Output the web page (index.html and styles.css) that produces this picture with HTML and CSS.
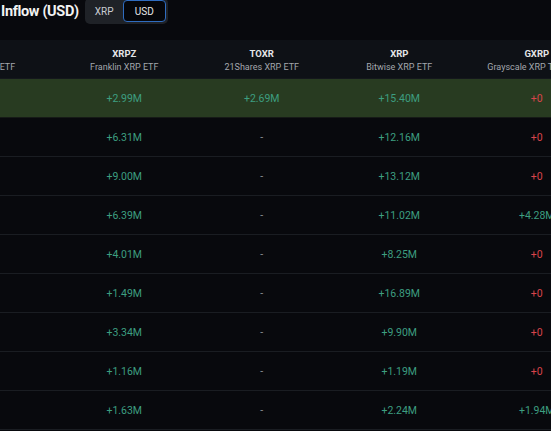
FILE: index.html
```html
<!DOCTYPE html>
<html>
<head>
<meta charset="utf-8">
<link rel="stylesheet" href="styles.css">
</head>
<body>
<div class="page">
  <div class="topbar">
    <h1 class="title">Inflow (USD)</h1>
    <div class="toggle">
      <button class="tbtn">XRP</button>
      <button class="tbtn active">USD</button>
    </div>
  </div>
  <div class="table">
    <div class="row head">
      <div class="cell first"><span class="sym">XRPC</span><span class="name">Canary XRP ETF</span></div>
      <div class="cell"><span class="sym">XRPZ</span><span class="name">Franklin XRP ETF</span></div>
      <div class="cell"><span class="sym">TOXR</span><span class="name">21Shares XRP ETF</span></div>
      <div class="cell"><span class="sym">XRP</span><span class="name">Bitwise XRP ETF</span></div>
      <div class="cell"><span class="sym">GXRP</span><span class="name">Grayscale XRP Trust ETF</span></div>
    </div>
    <div class="row hl">
      <div class="cell"></div><div class="cell pos">+2.99M</div><div class="cell pos">+2.69M</div><div class="cell pos">+15.40M</div><div class="cell neg">+0</div>
    </div>
    <div class="row">
      <div class="cell"></div><div class="cell pos">+6.31M</div><div class="cell nil">-</div><div class="cell pos">+12.16M</div><div class="cell neg">+0</div>
    </div>
    <div class="row">
      <div class="cell"></div><div class="cell pos">+9.00M</div><div class="cell nil">-</div><div class="cell pos">+13.12M</div><div class="cell neg">+0</div>
    </div>
    <div class="row">
      <div class="cell"></div><div class="cell pos">+6.39M</div><div class="cell nil">-</div><div class="cell pos">+11.02M</div><div class="cell pos">+4.28M</div>
    </div>
    <div class="row">
      <div class="cell"></div><div class="cell pos">+4.01M</div><div class="cell nil">-</div><div class="cell pos">+8.25M</div><div class="cell neg">+0</div>
    </div>
    <div class="row">
      <div class="cell"></div><div class="cell pos">+1.49M</div><div class="cell nil">-</div><div class="cell pos">+16.89M</div><div class="cell neg">+0</div>
    </div>
    <div class="row">
      <div class="cell"></div><div class="cell pos">+3.34M</div><div class="cell nil">-</div><div class="cell pos">+9.90M</div><div class="cell neg">+0</div>
    </div>
    <div class="row">
      <div class="cell"></div><div class="cell pos">+1.16M</div><div class="cell nil">-</div><div class="cell pos">+1.19M</div><div class="cell neg">+0</div>
    </div>
    <div class="row">
      <div class="cell"></div><div class="cell pos">+1.63M</div><div class="cell nil">-</div><div class="cell pos">+2.24M</div><div class="cell pos">+1.94M</div>
    </div>
  </div>
</div>
</body>
</html>
```

FILE: styles.css
```css
html, body {
  margin: 0;
  padding: 0;
  background: #08090d;
  overflow: hidden;
  width: 551px;
  height: 431px;
}
.page {
  font-family: Roboto, "Noto Sans", sans-serif;
  color: #e6e6e6;
}
.topbar {
  display: flex;
  align-items: center;
  height: 26px;
  margin-top: -2px;
  gap: 6px;
}
.title {
  margin: 0 0 0 1px;
  font-size: 14.5px;
  font-weight: 700;
  color: #f2f2f2;
  letter-spacing: -0.35px;
}
.toggle {
  display: flex;
  background: #1f2227;
  border-radius: 5px;
  padding: 2px 2px 2px 1px;
  height: 22px;
}
.tbtn {
  font-family: Roboto, sans-serif;
  font-size: 10px;
  color: #c9ccd1;
  background: transparent;
  border: 1.5px solid transparent;
  border-radius: 4px;
  padding: 0;
  width: 37px;
  height: 22px;
}
.tbtn.active {
  width: 43px;
  background: #05060a;
  border-color: #2f6cc0;
  color: #e8e8e8;
}
.table {
  margin-top: 16px;
  margin-left: -82px;
  width: 688px;
}
.row {
  display: grid;
  grid-template-columns: repeat(5, 137.5px);
  height: 38px;
  border-bottom: 1px solid #1a1d22;
}
.row.head {
  background: #0e1116;
  border-bottom-color: #14171c;
}
.row.hl {
  background: #283b21;
  border-bottom-color: #161a17;
}
.cell {
  display: flex;
  flex-direction: column;
  align-items: center;
  justify-content: center;
  font-size: 10.5px;
  white-space: nowrap;
}
.head .cell {
  gap: 3px;
  padding-top: 1px;
}
.head .cell.first {
  padding-right: 8px;
}
.sym {
  font-weight: 700;
  font-size: 9.5px;
  color: #e4e5e7;
}
.name {
  font-size: 9px;
  color: #a3a7ad;
}
.pos { color: #3d9e80; }
.neg { color: #d8444b; }
.nil { color: #8d9096; }
```
